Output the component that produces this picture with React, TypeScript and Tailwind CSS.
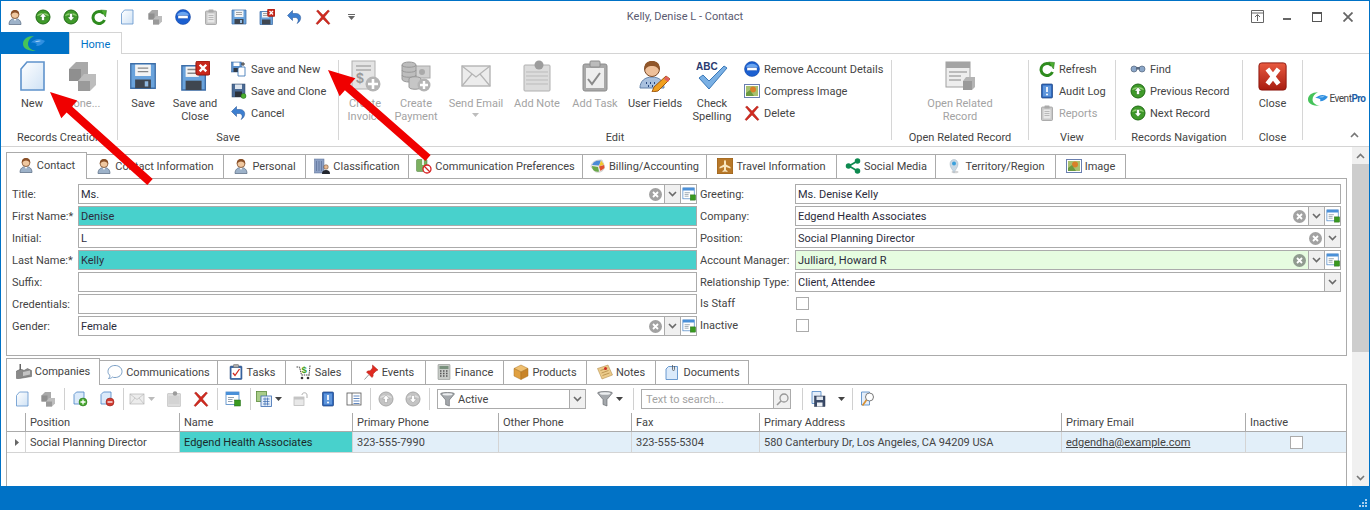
import React from 'react';

type IconProps = { s?: number };

const Svg: React.FC<{ s?: number; children: React.ReactNode }> = ({ s = 16, children }) => (
  <svg width={s} height={s} viewBox="0 0 32 32" className="shrink-0">
    {children}
  </svg>
);

// toolbar and ribbon glyphs, all drawn on a 32 box
const Person: React.FC<IconProps> = ({ s = 16 }) => (
  <Svg s={s}>
    <path d="M4 31c0-8 5-12 12-12s12 4 12 12z" fill="#9db2c9" stroke="#5c6f85" strokeWidth="1.5" />
    <path d="M13 19l3 5 3-5z" fill="#fff" />
    <circle cx="16" cy="11" r="8" fill="#f0c8a0" stroke="#7a4a28" strokeWidth="1.5" />
    <path d="M8 12c-1-7 3-10 8-10s9 3 8 10c-2-3-4-5-8-5s-6 2-8 5z" fill="#8a5028" />
  </Svg>
);
const Circle: React.FC<IconProps & { up?: boolean; gray?: boolean }> = ({ s = 16, up, gray }) => (
  <Svg s={s}>
    <circle cx="16" cy="16" r="14" fill={gray ? '#c4c4c4' : '#3f9a2a'} stroke={gray ? '#a8a8a8' : '#1f6a14'} strokeWidth="2" />
    <path d="M4 14c2-8 22-8 24 0-6-3-18-3-24 0z" fill={gray ? '#dedede' : '#8fd070'} />
    <path d={up ? 'M16 8l7 8h-4v7h-6v-7H9z' : 'M16 24l7-8h-4V9h-6v7H9z'} fill="#fff" stroke={gray ? '#999' : '#1f6a14'} strokeWidth="1" />
  </Svg>
);
const Refresh: React.FC<IconProps> = ({ s = 16 }) => (
  <Svg s={s}>
    <path d="M25 9A12 12 0 1 0 27 22" fill="none" stroke="#2e8b1e" strokeWidth="6" />
    <path d="M19 2l12 1-2 13z" fill="#4caf30" stroke="#1f6a14" strokeWidth="1" />
  </Svg>
);
const Doc: React.FC<IconProps> = ({ s = 16 }) => (
  <Svg s={s}>
    <defs>
      <linearGradient id="docg" x1="0" y1="0" x2="1" y2="1">
        <stop offset="0" stopColor="#ffffff" />
        <stop offset="1" stopColor="#cfe2f5" />
      </linearGradient>
    </defs>
    <path d="M11 2h17v28H5V9z" fill="url(#docg)" stroke="#5f93cc" strokeWidth="1.6" />
  </Svg>
);
const Cubes: React.FC<IconProps> = ({ s = 16 }) => (
  <Svg s={s}>
    <path d="M3 9l7-7h12v12l-7 7H3z" fill="#a9a9a9" />
    <path d="M3 9h12v12H3z" fill="#8f8f8f" />
    <path d="M12 21l6-7h12v11l-6 6H12z" fill="#bdbdbd" />
    <path d="M12 21h12v10H12z" fill="#9a9a9a" />
  </Svg>
);
const Remove: React.FC<IconProps> = ({ s = 16 }) => (
  <Svg s={s}>
    <circle cx="16" cy="16" r="15" fill="#1b5fd0" stroke="#0f3f9a" strokeWidth="1" />
    <path d="M4 13C6 3 26 3 28 13z" fill="#6aa5f0" />
    <rect x="6" y="13" width="20" height="6" fill="#fff" stroke="#0f3f9a" strokeWidth=".6" />
  </Svg>
);
const Clip: React.FC<IconProps> = ({ s = 16 }) => (
  <Svg s={s}>
    <rect x="5" y="4" width="22" height="27" rx="2" fill="#c8c8c8" stroke="#9a9a9a" strokeWidth="1.5" />
    <rect x="9" y="9" width="14" height="18" fill="#e8e8e8" />
    <rect x="11" y="1" width="10" height="6" rx="1" fill="#aaa" />
    <path d="M11 13h10M11 17h10M11 21h10" stroke="#aaa" strokeWidth="1.5" />
  </Svg>
);
const Floppy: React.FC<IconProps> = ({ s = 16 }) => (
  <Svg s={s}>
    <path d="M2 2h28v28H2z" fill="#6aa3dc" stroke="#3d6ea8" strokeWidth="1.5" />
    <rect x="7" y="3" width="18" height="13" fill="#f4f4f4" />
    <path d="M10 7h12M10 11h12" stroke="#888" strokeWidth="1.5" />
    <rect x="7" y="20" width="18" height="10" fill="#3f4650" />
    <rect x="18" y="22" width="4" height="6" fill="#8fb8e0" />
  </Svg>
);
const FloppyX: React.FC<IconProps> = ({ s = 16 }) => (
  <Svg s={s}>
    <path d="M2 5h25v26H2z" fill="#6aa3dc" stroke="#3d6ea8" strokeWidth="1.5" />
    <rect x="6" y="6" width="14" height="11" fill="#f4f4f4" />
    <path d="M8 9h9M8 13h9" stroke="#888" strokeWidth="1.5" />
    <rect x="6" y="21" width="17" height="10" fill="#3f4650" />
    <rect x="17" y="0" width="15" height="15" rx="2" fill="#c8281c" stroke="#8a140c" strokeWidth="1" />
    <path d="M21 4l7 7M28 4l-7 7" stroke="#fff" strokeWidth="2.6" />
  </Svg>
);
const Undo: React.FC<IconProps> = ({ s = 16 }) => (
  <Svg s={s}>
    <path d="M11 9h8c11 1 11 15 1 20 4-5 3-11-3-12h-6v6L1 13 11 3z" fill="#3d7fd0" stroke="#1f4f90" strokeWidth="1" />
  </Svg>
);
const RedX: React.FC<IconProps> = ({ s = 16 }) => (
  <Svg s={s}>
    <path d="M3 4l3-2 10 10L26 2l3 2-10 12 11 13-3 2-11-11L5 31l-3-2 11-13z" fill="#d02a20" stroke="#9c1810" strokeWidth=".8" />
  </Svg>
);
const SaveNew: React.FC<IconProps> = ({ s = 16 }) => (
  <Svg s={s}>
    <rect x="1" y="2" width="20" height="20" fill="#5a90cc" stroke="#2f5c96" />
    <rect x="5" y="3" width="12" height="7" fill="#fff" />
    <rect x="5" y="14" width="13" height="8" fill="#333a44" />
    <path d="M17 12h11v18H14V15z" fill="#fff" stroke="#2f6cb0" strokeWidth="1.6" />
    <path d="M24 2v8M20 6h8" stroke="#222" strokeWidth="1.8" />
  </Svg>
);
const SaveClone: React.FC<IconProps> = ({ s = 16 }) => (
  <Svg s={s}>
    <rect x="2" y="2" width="26" height="26" fill="#4a6a94" stroke="#2f4666" />
    <rect x="8" y="3" width="14" height="9" fill="#dfe6ee" />
    <rect x="8" y="17" width="14" height="11" fill="#2c323a" />
    <circle cx="25" cy="26" r="5" fill="#4caf30" stroke="#1f6a14" />
  </Svg>
);
const Invoice: React.FC<IconProps> = ({ s = 16 }) => (
  <Svg s={s}>
    <rect x="3" y="1" width="23" height="28" fill="#e4e4e4" stroke="#b0b0b0" />
    <path d="M7 6h15M7 10h15" stroke="#aaa" strokeWidth="1.3" />
    <text x="7" y="23" fontSize="14" fontWeight="700" fill="#9a9a9a" fontFamily="Liberation Sans, sans-serif">$</text>
    <circle cx="24" cy="24" r="7.5" fill="#b4b4b4" />
    <path d="M24 19v10M19 24h10" stroke="#fff" strokeWidth="2.6" />
  </Svg>
);
const Payment: React.FC<IconProps> = ({ s = 16 }) => (
  <Svg s={s}>
    <rect x="14" y="6" width="16" height="12" fill="#d0d0d0" stroke="#aaa" />
    <circle cx="22" cy="12" r="3" fill="#aaa" />
    <path d="M2 5c0-4 14-4 14 0v14c0 4-14 4-14 0z" fill="#bdbdbd" stroke="#989898" />
    <path d="M2 5c0 3 14 3 14 0M2 10c0 3 14 3 14 0M2 15c0 3 14 3 14 0" fill="none" stroke="#989898" />
    <path d="M9 19c0-3 12-3 12 0v8c0 3-12 3-12 0z" fill="#c6c6c6" stroke="#989898" />
    <circle cx="24" cy="25" r="6.5" fill="#b4b4b4" />
    <path d="M24 21v8M20 25h8" stroke="#fff" strokeWidth="2.4" />
  </Svg>
);
const Mail: React.FC<IconProps> = ({ s = 16 }) => (
  <Svg s={s}>
    <rect x="2" y="6" width="28" height="20" fill="#ececec" stroke="#b4b4b4" strokeWidth="1.4" />
    <path d="M2 6l14 11L30 6M2 26l10-12M30 26L20 14" fill="none" stroke="#b4b4b4" strokeWidth="1.2" />
  </Svg>
);
const Note: React.FC<IconProps> = ({ s = 16 }) => (
  <Svg s={s}>
    <rect x="3" y="5" width="26" height="26" rx="1" fill="#dcdcdc" stroke="#b0b0b0" />
    <path d="M5 12h22M5 16h22M5 20h22M5 24h22" stroke="#bbb" />
    <circle cx="18" cy="5" r="4.5" fill="#9c9c9c" />
  </Svg>
);
const Task: React.FC<IconProps> = ({ s = 16 }) => (
  <Svg s={s}>
    <rect x="4" y="4" width="24" height="27" rx="2" fill="#a8a8a8" stroke="#8c8c8c" />
    <rect x="7" y="8" width="18" height="20" fill="#eeeeee" />
    <rect x="11" y="1" width="10" height="6" rx="1" fill="#bbb" stroke="#8c8c8c" />
    <path d="M9 19l4 5 8-11" fill="none" stroke="#8a8a8a" strokeWidth="2" />
  </Svg>
);
const UserFields: React.FC<IconProps> = ({ s = 16 }) => (
  <Svg s={s}>
    <path d="M1 28c0-7 5-11 12-11s12 4 12 11z" fill="#a8c0de" stroke="#6080a8" />
    <path d="M7 23h1M11 23h1M15 23h1M9 26h1M13 26h1" stroke="#2a4a80" strokeWidth="2" />
    <circle cx="13" cy="9" r="7.5" fill="#eec09a" stroke="#7a4a28" />
    <path d="M6 10C4 3 9 1 13 1s9 2 7 9c-2-3-3-4-7-4s-5 1-7 4z" fill="#90562a" />
    <path d="M27 16l4 3-12 12-6 1 2-5z" fill="#f0a020" stroke="#a05a10" />
    <path d="M27 16l4 3-2 3-4-3z" fill="#e06060" />
  </Svg>
);
const Spelling: React.FC<IconProps> = ({ s = 16 }) => (
  <Svg s={s}>
    <text x="0" y="10" fontSize="10" fontWeight="700" fill="#2a3a70" fontFamily="Liberation Sans, sans-serif">ABC</text>
    <path d="M3 18l4-3 6 6L28 6l3 2-18 21z" fill="#7ab0e4" stroke="#3a78b8" />
  </Svg>
);
const Picture: React.FC<IconProps> = ({ s = 16 }) => (
  <Svg s={s}>
    <rect x="1" y="3" width="30" height="26" fill="#fff" stroke="#6a7fb0" strokeWidth="2" />
    <rect x="4" y="6" width="24" height="20" fill="#a8c070" />
    <circle cx="18" cy="13" r="6" fill="#d8802a" />
    <path d="M4 20l8-6 8 12H4z" fill="#6a9a40" />
  </Svg>
);
const Related: React.FC<IconProps> = ({ s = 16 }) => (
  <Svg s={s}>
    <rect x="2" y="2" width="24" height="25" fill="#eeeeee" stroke="#a0a0a0" />
    <rect x="2" y="2" width="24" height="6" fill="#a4a4a4" />
    <path d="M5 12h18M5 16h12M5 20h12" stroke="#aaa" strokeWidth="1.4" />
    <path d="M19 21l3-4h9v10l-3 3h-9z" fill="#b4b4b4" />
    <path d="M19 21h9v9h-9z" fill="#9a9a9a" />
  </Svg>
);
const Audit: React.FC<IconProps> = ({ s = 16 }) => (
  <Svg s={s}>
    <rect x="5" y="2" width="22" height="28" rx="2" fill="#2f68bc" stroke="#1a4080" strokeWidth="1.4" />
    <rect x="8" y="5" width="16" height="22" fill="#5f96dc" />
    <path d="M16 8v10" stroke="#fff" strokeWidth="3.4" />
    <circle cx="16" cy="23" r="2" fill="#fff" />
  </Svg>
);
const Binoculars: React.FC<IconProps> = ({ s = 16 }) => (
  <Svg s={s}>
    <circle cx="8" cy="16" r="6" fill="#8aa6c8" stroke="#5a6a80" strokeWidth="1.5" />
    <circle cx="24" cy="16" r="6" fill="#8aa6c8" stroke="#5a6a80" strokeWidth="1.5" />
    <rect x="12" y="12" width="8" height="5" fill="#5a6a80" />
  </Svg>
);
const CloseBig: React.FC<IconProps> = ({ s = 30 }) => (
  <Svg s={s}>
    <defs>
      <linearGradient id="closeg" x1="0" y1="0" x2="0" y2="1">
        <stop offset="0" stopColor="#e85a40" />
        <stop offset="1" stopColor="#a81c10" />
      </linearGradient>
    </defs>
    <rect x="1" y="2" width="29" height="29" rx="3" fill="url(#closeg)" stroke="#8a140c" />
    <path d="M8 10l4-3 4 5 4-5 4 3-5 6.500 5 6.500-4 3-4-5-4 5-4-3 5-6.500z" fill="#fff" />
  </Svg>
);
const Building: React.FC<IconProps> = ({ s = 16 }) => (
  <Svg s={s}>
    <rect x="1" y="2" width="19" height="28" fill="#8ca0c4" stroke="#5a6f96" />
    <path d="M5 6v20M10 6v20M15 6v20" stroke="#5a6f96" strokeWidth="1.4" />
    <circle cx="24" cy="18" r="4.5" fill="#e8b890" stroke="#5a3a20" />
    <path d="M16 32c0-6 3-8 8-8s8 2 8 8z" fill="#22262e" />
  </Svg>
);
const CommPref: React.FC<IconProps> = ({ s = 16 }) => (
  <Svg s={s}>
    <rect x="1" y="3" width="21" height="24" rx="2" fill="#7cb060" stroke="#4a7a38" />
    <rect x="12" y="2" width="4" height="12" fill="#eaf4e4" />
    <circle cx="22" cy="22" r="8" fill="#fff" stroke="#d82020" strokeWidth="2.6" />
    <path d="M16 16l12 12" stroke="#d82020" strokeWidth="2.6" />
  </Svg>
);
const Billing: React.FC<IconProps> = ({ s = 16 }) => (
  <Svg s={s}>
    <path d="M2 18C2 8 12 3 24 4l5 12c0 10-8 14-18 12z" fill="#e8e8e8" stroke="#b0b0b0" />
    <path d="M4 14C8 6 14 5 22 5l-4 10z" fill="#4a8ad8" />
    <path d="M22 5l6 8-10 4z" fill="#f0c830" />
    <path d="M18 17l10-3 1 6-8 6z" fill="#e05030" />
    <path d="M4 16l12 2 2 9c-8 2-14-3-14-11z" fill="#68a848" />
  </Svg>
);
const Travel: React.FC<IconProps> = ({ s = 16 }) => (
  <Svg s={s}>
    <rect x="0" y="0" width="32" height="32" fill="#b87828" stroke="#7a4c14" />
    <path d="M16 4c1.4 0 2 2 2 4v5l9 5v3l-9-3v6l3 2v2l-5-1-5 1v-2l3-2v-6l-9 3v-3l9-5V8c0-2 .6-4 2-4z" fill="#f8e6c0" />
  </Svg>
);
const Share: React.FC<IconProps> = ({ s = 16 }) => (
  <Svg s={s}>
    <path d="M8 16L25 6M8 16l17 10" stroke="#0e8a50" strokeWidth="3.4" />
    <circle cx="7" cy="16" r="5.5" fill="#0e8a50" />
    <circle cx="25" cy="6" r="5.5" fill="#0e8a50" />
    <circle cx="25" cy="26" r="5.5" fill="#0e8a50" />
  </Svg>
);
const Pin: React.FC<IconProps> = ({ s = 16 }) => (
  <Svg s={s}>
    <ellipse cx="18" cy="28" rx="7" ry="2.5" fill="#d4d4d4" />
    <path d="M16 30c-2-7-8-10-8-18a8 9 0 0 1 16 0c0 8-6 11-8 18z" fill="#c8d8e4" stroke="#a4b4c0" />
    <circle cx="16" cy="11" r="4" fill="#3aa0dc" />
  </Svg>
);
const Factory: React.FC<IconProps> = ({ s = 16 }) => (
  <Svg s={s}>
    <rect x="7" y="2" width="3" height="13" fill="#666" />
    <path d="M1 16l7-3h4l4 2 7-4 8 4v12l-24 4H1z" fill="#8a8a8a" stroke="#555" />
    <path d="M14 18l14-3v8l-14 3z" fill="#c4c4c4" />
  </Svg>
);
const Bubble: React.FC<IconProps> = ({ s = 16 }) => (
  <Svg s={s}>
    <path d="M16 3c8 0 14 5 14 12s-6 12-14 12c-2 0-4 0-5-1-2 2-5 3-8 3 2-2 3-4 3-6-3-2-4-5-4-8C2 8 8 3 16 3z" fill="#fff" stroke="#5a88b8" strokeWidth="1.6" />
  </Svg>
);
const TaskTab: React.FC<IconProps> = ({ s = 16 }) => (
  <Svg s={s}>
    <rect x="4" y="4" width="24" height="27" rx="2" fill="#3c6aa8" stroke="#28487a" />
    <rect x="7" y="8" width="18" height="20" fill="#fff" />
    <rect x="11" y="1" width="10" height="6" rx="1" fill="#aaa" stroke="#666" />
    <path d="M10 18l4 5 9-13" fill="none" stroke="#d02a20" strokeWidth="2.6" />
  </Svg>
);
const Sales: React.FC<IconProps> = ({ s = 16 }) => (
  <Svg s={s}>
    <path d="M1 6h6l4 16h16M28 3l-2 20" fill="none" stroke="#444" strokeWidth="2" strokeDasharray="3 1.5" />
    <text x="11" y="18" fontSize="19" fontWeight="700" fill="#3aa020" fontFamily="Liberation Sans, sans-serif">$</text>
    <circle cx="12" cy="28" r="2.6" fill="#333" />
    <circle cx="24" cy="28" r="2.6" fill="#333" />
  </Svg>
);
const RedPin: React.FC<IconProps> = ({ s = 16 }) => (
  <Svg s={s}>
    <path d="M19 2l11 10-4 2-6 6c1 3 0 5-2 7L7 16c2-2 5-3 7-2l5-6z" fill="#e02a20" stroke="#a81810" />
    <path d="M12 21l-9 10" stroke="#999" strokeWidth="2" />
  </Svg>
);
const Calc: React.FC<IconProps> = ({ s = 16 }) => (
  <Svg s={s}>
    <rect x="4" y="1" width="24" height="30" rx="1" fill="#c8ccc8" stroke="#7c807c" />
    <rect x="7" y="4" width="18" height="6" fill="#78907c" />
    <path d="M8 14h3M14 14h3M20 14h3M8 19h3M14 19h3M20 19h3M8 24h3M14 24h3M20 24h3" stroke="#555" strokeWidth="2.6" />
  </Svg>
);
const Box: React.FC<IconProps> = ({ s = 16 }) => (
  <Svg s={s}>
    <path d="M2 9l14-7 14 7-14 7z" fill="#f0c070" stroke="#a87020" />
    <path d="M2 9l14 7v15L2 24z" fill="#e0a040" stroke="#a87020" />
    <path d="M30 9L16 16v15l14-7z" fill="#c88428" stroke="#a87020" />
  </Svg>
);
const Sticky: React.FC<IconProps> = ({ s = 16 }) => (
  <Svg s={s}>
    <path d="M1 9l21-7 9 20-21 8z" fill="#eccb8a" stroke="#a8803c" />
    <path d="M7 13l14-5M9 18l14-5M11 23l14-5" stroke="#a8803c" strokeWidth="1.4" />
    <circle cx="17" cy="9" r="3" fill="#d02a20" />
  </Svg>
);
const DocClip: React.FC<IconProps> = ({ s = 16 }) => (
  <Svg s={s}>
    <path d="M9 5h18v26H4V10z" fill="#dbeafa" stroke="#4a84c4" strokeWidth="1.6" />
    <path d="M17 2v9a2 2 0 0 0 4 0V4" fill="none" stroke="#555" strokeWidth="1.6" />
  </Svg>
);
const DocBadge: React.FC<IconProps & { minus?: boolean }> = ({ s = 16, minus }) => (
  <Svg s={s}>
    <path d="M9 2h15v24H4V7z" fill="#dbeafa" stroke="#4a84c4" strokeWidth="1.6" />
    <circle cx="22" cy="22" r="8" fill={minus ? '#d03a30' : '#48a830'} stroke={minus ? '#8a1810' : '#1f6a14'} />
    <path d={minus ? 'M17 22h10' : 'M22 17v10M17 22h10'} stroke="#fff" strokeWidth="2.6" />
  </Svg>
);
const WinAdd: React.FC<IconProps> = ({ s = 16 }) => (
  <Svg s={s}>
    <rect x="2" y="2" width="26" height="25" fill="#fff" stroke="#4a84c4" strokeWidth="1.6" />
    <rect x="2" y="2" width="26" height="6" fill="#4a90d8" />
    <path d="M6 13h12M6 17h9M6 21h9" stroke="#7a8a9a" strokeWidth="1.6" />
    <rect x="19" y="18" width="12" height="12" fill="#3a9a20" stroke="#1f6a14" />
  </Svg>
);
const Tiles: React.FC<IconProps> = ({ s = 16 }) => (
  <Svg s={s}>
    <rect x="1" y="1" width="20" height="20" fill="#a8cc88" stroke="#5a8a3a" strokeWidth="1.6" />
    <rect x="10" y="10" width="21" height="21" fill="#e4eefa" stroke="#3a6ab0" strokeWidth="1.6" />
    <path d="M14 16h13M14 21h13M14 26h13M18 13v16M23 13v16" stroke="#3a6ab0" strokeWidth="1.4" />
  </Svg>
);
const Detach: React.FC<IconProps> = ({ s = 16 }) => (
  <Svg s={s}>
    <rect x="2" y="12" width="20" height="17" fill="#e8e8e8" stroke="#b4b4b4" strokeWidth="1.4" />
    <rect x="2" y="12" width="20" height="5" fill="#c4c4c4" />
    <path d="M18 8c0-6 10-6 10 0v6" fill="none" stroke="#b0b0b0" strokeWidth="2" />
  </Svg>
);
const ListPanel: React.FC<IconProps> = ({ s = 16 }) => (
  <Svg s={s}>
    <rect x="2" y="4" width="28" height="24" fill="#fff" stroke="#555" strokeWidth="1.6" />
    <path d="M12 4v24" stroke="#555" strokeWidth="1.6" />
    <path d="M15 10h12M15 15h12M15 20h12M15 25h12" stroke="#3a6ab0" strokeWidth="1.6" />
  </Svg>
);
const Funnel: React.FC<IconProps> = ({ s = 16 }) => (
  <Svg s={s}>
    <path d="M1 4c0-4 30-4 30 0L20 17v13l-8-3V17z" fill="#a4a8ac" stroke="#5c6064" strokeWidth="1.2" />
    <ellipse cx="16" cy="5" rx="11" ry="2.5" fill="#eceef0" />
  </Svg>
);
const SaveAs: React.FC<IconProps> = ({ s = 16 }) => (
  <Svg s={s}>
    <path d="M4 1h18v24H4z" fill="#e4eefa" stroke="#4a84c4" strokeWidth="1.6" />
    <rect x="9" y="10" width="21" height="21" fill="#3a4a68" stroke="#26324a" />
    <rect x="13" y="11" width="13" height="7" fill="#dfe6ee" />
    <rect x="14" y="23" width="11" height="8" fill="#eef1f5" />
  </Svg>
);
const Find: React.FC<IconProps> = ({ s = 16 }) => (
  <Svg s={s}>
    <path d="M3 2h16v26H3z" fill="#e4eefa" stroke="#4a84c4" strokeWidth="1.6" />
    <circle cx="19" cy="12" r="8" fill="#fff" stroke="#7a7a7a" strokeWidth="2" />
    <path d="M13 18L5 29" stroke="#d89030" strokeWidth="3.4" />
  </Svg>
);
const Clear: React.FC<{ tint?: boolean }> = ({ tint }) => (
  <svg width="13" height="13" viewBox="0 0 13 13" className="shrink-0">
    <circle cx="6.5" cy="6.5" r="6.5" fill={tint ? '#909c90' : '#a2a2a2'} />
    <path d="M4 4l5 5M9 4l-5 5" stroke="#fff" strokeWidth="1.8" />
  </svg>
);
const Chevron: React.FC<{ up?: boolean; c?: string }> = ({ up, c = '#6a6a6a' }) => (
  <svg width="9" height="6" viewBox="0 0 9 6">
    <path d={up ? 'M1 5l3.5-3.5L8 5' : 'M1 1l3.5 3.5L8 1'} fill="none" stroke={c} strokeWidth="1.6" />
  </svg>
);
const Caret: React.FC<{ c?: string }> = ({ c = '#444' }) => (
  <svg width="7" height="4" viewBox="0 0 7 4" className="shrink-0">
    <path d="M0 0h7L3.5 4z" fill={c} />
  </svg>
);
const Crescent: React.FC<{ w: number; h: number }> = ({ w, h }) => (
  <svg width={w} height={h} viewBox="0 0 22 15" className="shrink-0">
    <path d="M11 0C4 0 0 3.500 0 8c0 4.500 5 7 13 7-5-1-8-3.500-8-7 0-3.500 2.500-6.500 6-8z" fill="#45c35a" />
    <path d="M8 6.500c2-2 5-3.500 8-3.500 2 0 4 1 6 2-2 3-5 5-9 5 1-1 1-2 0-2.500-1.500-.8-3-1-5-1z" fill="#2f8fe0" />
    <path d="M12 5.500c2-1 4-1 6-.5-2 .5-4 1-6 .5z" fill="#d8ecfa" />
  </svg>
);

const QUICK = [
  <Person />, <Circle up />, <Circle />, <Refresh />, <Doc />, <Cubes />, <Remove />, <Clip />, <Floppy />, <FloppyX />, <Undo />, <RedX />,
];

const LargeBtn: React.FC<{ icon: React.ReactNode; lines: string[]; off?: boolean; caret?: boolean; className: string }> = ({ icon, lines, off, caret, className }) => (
  <div className={`flex flex-col items-center pt-[6px] shrink-0 ${className} ${off ? 'text-[#a3a3a3]' : ''}`}>
    <div className="h-[32px] flex items-center">{icon}</div>
    <div className="mt-[5px] text-center leading-[13px] whitespace-nowrap">
      {lines.map((l) => (
        <div key={l}>{l}</div>
      ))}
      {caret && (
        <div className="flex justify-center mt-[3px]">
          <Caret c="#bdbdbd" />
        </div>
      )}
    </div>
  </div>
);

const SmallCol: React.FC<{ rows: { icon: React.ReactNode; label: string; off?: boolean }[]; className: string }> = ({ rows, className }) => (
  <div className={`flex flex-col pt-[4px] ${className}`}>
    {rows.map((r) => (
      <div key={r.label} className={`h-[22px] flex items-center gap-[4px] whitespace-nowrap ${r.off ? 'text-[#a3a3a3]' : ''}`}>
        {r.icon}
        <span className="pt-[2px]">{r.label}</span>
      </div>
    ))}
  </div>
);

const Group: React.FC<{ label: string; className: string; children: React.ReactNode }> = ({ label, className, children }) => (
  <div className={`flex flex-col shrink-0 ${className}`}>
    <div className="flex h-[76px]">{children}</div>
    <div className="h-[14px] leading-[16px] text-center whitespace-nowrap">{label}</div>
  </div>
);

const Sep = () => <div className="w-px h-[80px] mt-[6px] bg-[#d6d6d6] shrink-0" />;

const Ribbon = () => (
  <div className="h-[93px] flex border-b border-[#d4d4d4] shrink-0">
    <Group label="Records Creation" className="w-[116px]">
      <LargeBtn className="w-[50px] ml-[6px]" icon={<Doc s={32} />} lines={['New']} />
      <LargeBtn className="w-[50px]" off icon={<Cubes s={32} />} lines={['Clone...']} />
    </Group>
    <Sep />
    <Group label="Save" className="w-[220px]">
      <LargeBtn className="w-[50px]" icon={<Floppy s={28} />} lines={['Save']} />
      <LargeBtn className="w-[54px]" icon={<FloppyX s={30} />} lines={['Save and', 'Close']} />
      <SmallCol
        className="ml-[9px]"
        rows={[
          { icon: <SaveNew />, label: 'Save and New' },
          { icon: <SaveClone />, label: 'Save and Clone' },
          { icon: <Undo />, label: 'Cancel' },
        ]}
      />
    </Group>
    <Sep />
    <Group label="Edit" className="w-[552px]">
      <LargeBtn className="w-[52px]" off icon={<Invoice s={32} />} lines={['Create', 'Invoice']} />
      <LargeBtn className="w-[50px]" off icon={<Payment s={32} />} lines={['Create', 'Payment']} />
      <LargeBtn className="w-[70px]" off caret icon={<Mail s={32} />} lines={['Send Email']} />
      <LargeBtn className="w-[52px]" off icon={<Note s={32} />} lines={['Add Note']} />
      <LargeBtn className="w-[64px]" off icon={<Task s={32} />} lines={['Add Task']} />
      <LargeBtn className="w-[56px]" icon={<UserFields s={32} />} lines={['User Fields']} />
      <LargeBtn className="w-[58px]" icon={<Spelling s={32} />} lines={['Check', 'Spelling']} />
      <SmallCol
        className="ml-[3px]"
        rows={[
          { icon: <Remove />, label: 'Remove Account Details' },
          { icon: <Picture />, label: 'Compress Image' },
          { icon: <RedX />, label: 'Delete' },
        ]}
      />
    </Group>
    <Sep />
    <Group label="Open Related Record" className="w-[136px]">
      <LargeBtn className="w-full" off icon={<Related s={32} />} lines={['Open Related', 'Record']} />
    </Group>
    <Sep />
    <Group label="View" className="w-[86px]">
      <SmallCol
        className="ml-[10px]"
        rows={[
          { icon: <Refresh />, label: 'Refresh' },
          { icon: <Audit />, label: 'Audit Log' },
          { icon: <Clip />, label: 'Reports', off: true },
        ]}
      />
    </Group>
    <Sep />
    <Group label="Records Navigation" className="w-[126px]">
      <SmallCol
        className="ml-[14px]"
        rows={[
          { icon: <Binoculars />, label: 'Find' },
          { icon: <Circle up />, label: 'Previous Record' },
          { icon: <Circle />, label: 'Next Record' },
        ]}
      />
    </Group>
    <Sep />
    <Group label="Close" className="w-[59px]">
      <LargeBtn className="w-full" icon={<CloseBig />} lines={['Close']} />
    </Group>
    <Sep />
    <div className="flex-1 flex flex-col items-center">
      <div className="h-[76px] flex items-center gap-[1px] pt-[14px] pl-[2px]">
        <Crescent w={20} h={14} />
        <span className="text-[10px] tracking-[-0.5px] text-[#444]">
          Event<b className="text-[#1d5fa8]">Pro</b>
        </span>
      </div>
      <div className="self-end pr-[10px] mt-[2px]">
        <Chevron up c="#777" />
      </div>
    </div>
  </div>
);

const Tab: React.FC<{ icon: React.ReactNode; label: string; active?: boolean; className: string }> = ({ icon, label, active, className }) => (
  <div
    className={`flex items-center justify-center gap-[3px] whitespace-nowrap shrink-0 bg-white border-[#ababab] ${className} ${
      active ? 'h-[27px] -mb-px z-10 border-x border-t pb-[3px]' : 'h-[24px] border-t border-r pb-[1px]'
    }`}
  >
    {icon}
    <span className="pt-[2px]">{label}</span>
  </div>
);

const Field: React.FC<{ value?: string; tone?: string; clear?: boolean; drop?: boolean; add?: boolean }> = ({ value, tone = 'bg-white', clear, drop, add }) => (
  <div className={`flex-1 h-[20px] border border-[#ababab] flex items-center ${tone}`}>
    <span className="flex-1 pl-[2px] pt-[2px] text-[#2c2c3c] whitespace-nowrap">{value}</span>
    {clear && (
      <span className="mr-[2px] flex">
        <Clear tint={tone !== 'bg-white'} />
      </span>
    )}
    {drop && (
      <span className="w-[16px] h-full bg-[#f0f0f0] border-l border-[#ababab] flex items-center justify-center">
        <Chevron />
      </span>
    )}
    {add && (
      <span className="w-[16px] h-full bg-white border-l border-[#ababab] flex items-center justify-center">
        <WinAdd s={14} />
      </span>
    )}
  </div>
);

const Row: React.FC<{ label: string; star?: boolean; className: string; rowClass?: string; children: React.ReactNode }> = ({ label, star, className, rowClass = '', children }) => (
  <div className={`flex items-center h-[20px] ${rowClass}`}>
    <div className={`shrink-0 whitespace-nowrap pt-[2px] ${className}`}>
      {label}
      {star && '*'}
    </div>
    {children}
  </div>
);

const Check = () => <div className="w-[13px] h-[13px] border border-[#ababab] bg-white ml-px" />;

const Tool: React.FC<{ className: string; children: React.ReactNode }> = ({ className, children }) => (
  <div className={`flex items-center justify-center gap-[3px] shrink-0 ${className}`}>{children}</div>
);
const ToolSep: React.FC<{ className: string }> = ({ className }) => <div className={`w-px h-[22px] bg-[#d0d0d0] shrink-0 ${className}`} />;

const HEAD = ['', 'Position', 'Name', 'Primary Phone', 'Other Phone', 'Fax', 'Primary Address', 'Primary Email', 'Inactive'];
const COLS = 'grid grid-cols-[18px_154px_173px_146px_133px_128px_302px_184px_1fr]';

export default function App() {
  return (
    <div className="relative w-[1370px] h-[510px] overflow-hidden bg-white flex flex-col border-t border-x border-[#0072c6] font-['Roboto',sans-serif] text-[11px] leading-[14px] text-[#444]">
      {/* title bar */}
      <div className="h-[31px] grid grid-cols-[1fr_auto_1fr] items-center shrink-0">
        <div className="flex items-center">
          {QUICK.map((icon, i) => (
            <div key={i} className="w-[28px] flex justify-center">
              {icon}
            </div>
          ))}
          <div className="w-[28px] flex flex-col items-center gap-[1px]">
            <div className="w-[7px] h-px bg-[#666]" />
            <Caret c="#666" />
          </div>
        </div>
        <div className="text-[#5a5a70]">Kelly, Denise L - Contact</div>
        <div className="flex justify-end items-center gap-[17px] pr-[14px]">
          <svg width="13" height="13" viewBox="0 0 13 13">
            <path d="M.5.500h12v12H.5zM.5 3h12M6.500 11V5M4 7l2.500-2.500L9 7" fill="none" stroke="#666" />
          </svg>
          <div className="w-[8px] h-[2px] bg-[#666] mt-[5px] mx-[2px]" />
          <div className="w-[10px] h-[10px] border border-t-2 border-[#555] mx-[2px]" />
          <svg width="10" height="10" viewBox="0 0 10 10" className="mx-[2px]">
            <path d="M.5.500l9 9M9.500.500l-9 9" stroke="#666" strokeWidth="1.8" />
          </svg>
        </div>
      </div>

      {/* ribbon tabs */}
      <div className="h-[22px] flex border-b border-[#d4d4d4] shrink-0">
        <div className="w-[68px] -mb-px bg-[#0072c6] flex items-center justify-center pr-[2px]">
          <Crescent w={22} h={15} />
        </div>
        <div className="w-[53px] h-[22px] bg-white border-x border-t border-[#d4d4d4] text-[#0072c6] flex items-center justify-center pt-[2px]">Home</div>
      </div>

      <Ribbon />

      {/* body */}
      <div className="flex-1 min-h-0 flex">
        <div className="flex-1 min-w-0 flex flex-col pt-[5px] px-[5px]">
          <div className="flex items-end h-[26px] shrink-0 relative">
            <Tab active className="w-[81px]" icon={<Person />} label="Contact" />
            <Tab className="w-[137px]" icon={<Person />} label="Contact Information" />
            <Tab className="w-[82px]" icon={<Person />} label="Personal" />
            <Tab className="w-[103px]" icon={<Building />} label="Classification" />
            <Tab className="w-[174px]" icon={<CommPref />} label="Communication Preferences" />
            <Tab className="w-[124px]" icon={<Billing />} label="Billing/Accounting" />
            <Tab className="w-[130px]" icon={<Travel />} label="Travel Information" />
            <Tab className="w-[99px]" icon={<Share />} label="Social Media" />
            <Tab className="w-[120px]" icon={<Pin />} label="Territory/Region" />
            <Tab className="w-[70px]" icon={<Picture />} label="Image" />
          </div>
          <div className="h-[178px] shrink-0 border border-[#ababab] px-[5px] pt-[5px] flex gap-[3px]">
            <div className="w-[685px] flex flex-col gap-[2px]">
              <Row label="Title:" className="w-[66px]"><Field value="Ms." clear drop add /></Row>
              <Row label="First Name:" star className="w-[66px]"><Field value="Denise" tone="bg-[#48d1cc]" /></Row>
              <Row label="Initial:" className="w-[66px]"><Field value="L" /></Row>
              <Row label="Last Name:" star className="w-[66px]"><Field value="Kelly" tone="bg-[#48d1cc]" /></Row>
              <Row label="Suffix:" className="w-[66px]"><Field /></Row>
              <Row label="Credentials:" className="w-[66px]"><Field /></Row>
              <Row label="Gender:" className="w-[66px]"><Field value="Female" clear drop add /></Row>
            </div>
            <div className="flex-1 flex flex-col gap-[2px]">
              <Row label="Greeting:" className="w-[95px]"><Field value="Ms. Denise Kelly" /></Row>
              <Row label="Company:" className="w-[95px]"><Field value="Edgend Health Associates" clear drop add /></Row>
              <Row label="Position:" className="w-[95px]"><Field value="Social Planning Director" clear drop /></Row>
              <Row label="Account Manager:" className="w-[95px]"><Field value="Julliard, Howard R" tone="bg-[#e6fce0]" clear drop add /></Row>
              <Row label="Relationship Type:" className="w-[95px]"><Field value="Client, Attendee" drop /></Row>
              <Row label="Is Staff" className="w-[95px]" rowClass="-mt-px"><Check /></Row>
              <Row label="Inactive" className="w-[95px]"><Check /></Row>
            </div>
          </div>

          <div className="flex items-end h-[26px] shrink-0 mt-[2px] relative">
            <Tab active className="w-[94px]" icon={<Factory />} label="Companies" />
            <Tab className="w-[118px]" icon={<Bubble />} label="Communications" />
            <Tab className="w-[68px]" icon={<TaskTab />} label="Tasks" />
            <Tab className="w-[66px]" icon={<Sales />} label="Sales" />
            <Tab className="w-[74px]" icon={<RedPin />} label="Events" />
            <Tab className="w-[78px]" icon={<Calc />} label="Finance" />
            <Tab className="w-[83px]" icon={<Box />} label="Products" />
            <Tab className="w-[69px]" icon={<Sticky />} label="Notes" />
            <Tab className="w-[93px]" icon={<DocClip />} label="Documents" />
          </div>
          <div className="flex-1 min-h-0 border-x border-t border-[#ababab]">
            <div className="h-[28px] flex items-center">
              <Tool className="w-[30px]"><Doc /></Tool>
              <Tool className="w-[22px]"><Cubes /></Tool>
              <ToolSep className="ml-[5px]" />
              <Tool className="w-[30px]"><DocBadge /></Tool>
              <Tool className="w-[24px]"><DocBadge minus /></Tool>
              <ToolSep className="ml-[4px]" />
              <Tool className="w-[36px]"><Mail /><Caret c="#bbb" /></Tool>
              <Tool className="w-[28px]"><Note /></Tool>
              <Tool className="w-[26px]"><RedX /></Tool>
              <ToolSep className="ml-[3px]" />
              <Tool className="w-[30px]"><WinAdd /></Tool>
              <ToolSep className="ml-[2px]" />
              <Tool className="w-[36px]"><Tiles /><Caret /></Tool>
              <Tool className="w-[28px]"><Detach /></Tool>
              <Tool className="w-[26px]"><Audit /></Tool>
              <Tool className="w-[26px]"><ListPanel /></Tool>
              <ToolSep className="ml-[3px]" />
              <Tool className="w-[30px]"><Circle up gray /></Tool>
              <Tool className="w-[24px]"><Circle gray /></Tool>
              <ToolSep className="ml-[4px]" />
              <div className="w-[149px] h-[20px] ml-[7px] border border-[#ababab] flex items-center shrink-0">
                <span className="ml-[2px] mr-[3px] flex"><Funnel s={15} /></span>
                <span className="flex-1 pt-[2px]">Active</span>
                <span className="w-[16px] h-full bg-[#f0f0f0] border-l border-[#ababab] flex items-center justify-center"><Chevron /></span>
              </div>
              <Tool className="w-[47px]"><Funnel /><Caret /></Tool>
              <ToolSep className="" />
              <div className="w-[150px] h-[20px] ml-[7px] border border-[#ababab] flex items-center shrink-0">
                <span className="flex-1 pl-[4px] pt-[2px] text-[#a3a3a3]">Text to search...</span>
                <span className="w-[17px] h-full bg-[#f0f0f0] border-l border-[#ababab] flex items-center justify-center">
                  <svg width="13" height="13" viewBox="0 0 13 13">
                    <circle cx="8" cy="5" r="4" fill="none" stroke="#999" strokeWidth="1.3" />
                    <path d="M5 8l-4 4" stroke="#999" strokeWidth="1.6" />
                  </svg>
                </span>
              </div>
              <ToolSep className="ml-[11px]" />
              <Tool className="w-[49px] gap-[12px]"><SaveAs /><Caret /></Tool>
              <ToolSep className="" />
              <Tool className="w-[30px]"><Find /></Tool>
            </div>
            <div className={`${COLS} grid-rows-[18px] h-[19px] border-b border-[#ababab]`}>
              {HEAD.map((h, i) => (
                <div key={i} className={`pl-[4px] leading-[20px] whitespace-nowrap ${i > 0 ? 'border-l border-[#ababab]' : ''}`}>{h}</div>
              ))}
            </div>
            <div className={`${COLS} grid-rows-[20px] h-[21px] border-b border-[#d4d4d4] leading-[22px] whitespace-nowrap`}>
              <div className="flex items-center justify-center pl-[2px]">
                <svg width="4" height="7" viewBox="0 0 4 7"><path d="M0 0l4 3.500L0 7z" fill="#666" /></svg>
              </div>
              <div className="pl-[4px] border-l border-[#d4d4d4]">Social Planning Director</div>
              <div className="pl-[4px] border-l border-[#d4d4d4] bg-[#48d1cc] text-[#1a2a2a]">Edgend Health Associates</div>
              <div className="pl-[4px] border-l border-[#d4d4d4] bg-[#e2eff9]">323-555-7990</div>
              <div className="pl-[4px] border-l border-[#d4d4d4] bg-[#e2eff9]" />
              <div className="pl-[4px] border-l border-[#d4d4d4] bg-[#e2eff9]">323-555-5304</div>
              <div className="pl-[4px] border-l border-[#d4d4d4] bg-[#e2eff9]">580 Canterbury Dr, Los Angeles, CA 94209 USA</div>
              <div className="pl-[4px] border-l border-[#d4d4d4] bg-[#e2eff9] underline">edgendha@example.com</div>
              <div className="border-l border-[#d4d4d4] bg-[#e2eff9] flex items-center justify-center">
                <div className="w-[13px] h-[13px] border border-[#ababab] bg-white" />
              </div>
            </div>
          </div>
        </div>

        {/* scrollbar */}
        <div className="w-[17px] shrink-0 bg-[#f0f0f0] flex flex-col">
          <div className="h-[17px] flex items-center justify-center"><Chevron up c="#777" /></div>
          <div className="h-[188px] bg-[#cdcdcd]" />
          <div className="flex-1 flex items-end justify-center pb-[5px]"><Chevron c="#777" /></div>
        </div>
      </div>

      {/* status bar */}
      <div className="h-[24px] shrink-0 bg-[#0072c6] -mx-px flex items-end justify-end pr-[2px] pb-[2px]">
        <svg width="9" height="9" viewBox="0 0 9 9" fill="#a8cfee">
          <rect x="6" y="0" width="2" height="2" />
          <rect x="3" y="3" width="2" height="2" />
          <rect x="6" y="3" width="2" height="2" />
          <rect x="0" y="6" width="2" height="2" />
          <rect x="3" y="6" width="2" height="2" />
          <rect x="6" y="6" width="2" height="2" />
        </svg>
      </div>

      {/* annotation arrows over the window */}
      <svg width="1370" height="510" className="absolute -left-px -top-px pointer-events-none z-20">
        <polygon points="50,92 77.3,100.500 72,106.400 152.700,179 147.300,185 66.600,112.400 61.300,118.300" fill="#f00000" />
        <polygon points="328,70 355.400,78.200 350.100,84.200 430.600,155 425.400,161 344.900,90.200 339.600,96.200" fill="#f00000" />
      </svg>
    </div>
  );
}
